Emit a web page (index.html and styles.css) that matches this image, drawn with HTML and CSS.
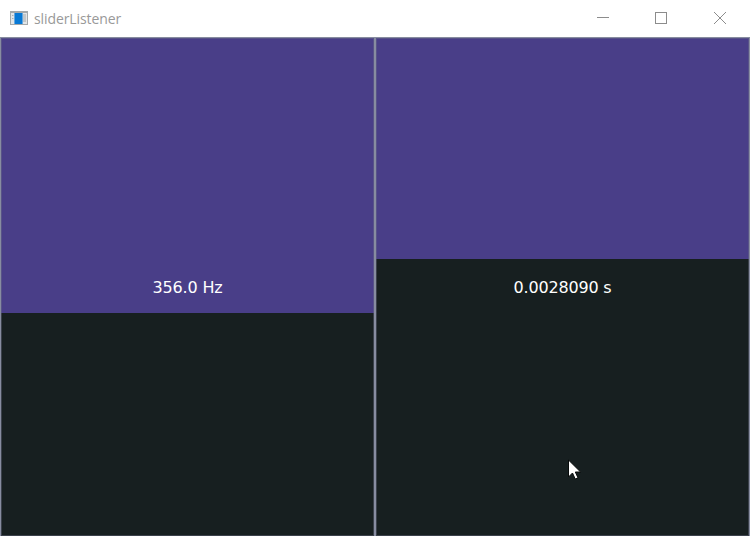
FILE: index.html
```html
<!DOCTYPE html>
<html lang="en">
<head>
<meta charset="utf-8">
<title>sliderListener</title>
<link rel="stylesheet" href="styles.css">
</head>
<body>
<header class="titlebar">
  <svg class="app-icon" width="18" height="14" viewBox="0 0 18 14">
    <rect width="18" height="14" fill="#a5a9ab"/>
    <rect x="1" y="2" width="16" height="11" fill="#e2e5e7"/>
    <rect x="4" y="2" width="9" height="11" fill="#c5d9e9"/>
    <rect x="4.5" y="2" width="8" height="11" fill="#0879d5"/>
    <rect x="13" y="3" width="3" height="8" fill="#c3c7c9"/>
    <path d="M2 4.5h1.5M2 7.5h1.5" stroke="#a9b0b4"/>
  </svg>
  <h1 class="title">sliderListener</h1>
  <svg class="controls" width="130" height="14" viewBox="0 0 130 14" fill="none" stroke="#8c8c8c">
    <path d="M1 6.5h12"/>
    <rect x="59.5" y="1.5" width="11" height="11"/>
    <path d="M118 1l12 12M130 1l-12 12"/>
  </svg>
</header>
<main class="sliders">
  <section class="slider frequency"><span class="value">356.0 Hz</span></section>
  <section class="slider period"><span class="value">0.0028090 s</span></section>
</main>
<svg class="cursor" width="14" height="22" viewBox="0 0 14 22">
  <path d="M1.5 1v17l4-4 2.7 6 2.8-1.2-2.7-5.8h5.3z" fill="#fff" stroke="#080b0b"/>
</svg>
</body>
</html>
```
FILE: styles.css
```css
* { box-sizing: border-box; }
body {
  margin: 0;
  height: 536px;
  overflow: hidden;
  display: flex;
  flex-direction: column;
  background: #fff;
}
.titlebar {
  flex: 0 0 37px;
  display: flex;
  align-items: center;
  padding: 0 24px 1px 10px;
}
.title {
  margin: 2px 0 0 6px;
  font: 400 14px/20px "Open Sans", "Noto Sans", sans-serif;
  letter-spacing: -0.1px;
  color: #999;
}
.controls { margin-left: auto; }
.sliders {
  flex: 1;
  display: grid;
  grid-template-columns: 373px 373px;
  column-gap: 2px;
  padding: 1px 1px 0;
  background: #878ca0;
}
.slider {
  display: flex;
  align-items: center;
  justify-content: center;
  padding-top: 2px;
  box-shadow: inset 0 0 0 1px rgba(110, 112, 135, 0.42);
}
.frequency { background: linear-gradient(#493e88 275px, #171f20 275px); }
.period { background: linear-gradient(#493e88 221px, #171f20 221px); }
.value {
  font: 16px/20px "DejaVu Sans", sans-serif;
  letter-spacing: -0.17px;
  color: #fff;
}
.cursor {
  position: absolute;
  left: 567px;
  top: 459px;
}
```
